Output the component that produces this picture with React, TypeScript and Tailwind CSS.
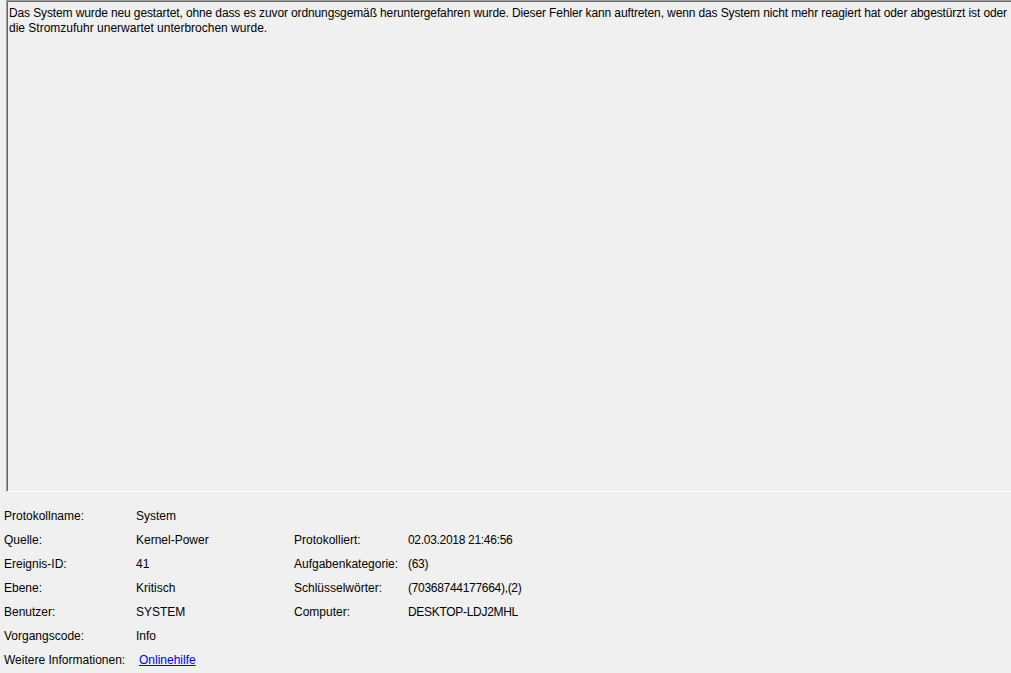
export default function App() {
  const rows: [string, React.ReactNode, string?, string?][] = [
    ['Protokollname:', 'System'],
    ['Quelle:', 'Kernel-Power', 'Protokolliert:', '02.03.2018 21:46:56'],
    ['Ereignis-ID:', '41', 'Aufgabenkategorie:', '(63)'],
    ['Ebene:', 'Kritisch', 'Schlüsselwörter:', '(70368744177664),(2)'],
    ['Benutzer:', 'SYSTEM', 'Computer:', 'DESKTOP-LDJ2MHL'],
    ['Vorgangscode:', 'Info'],
  ];

  return (
    <div
      className="w-[1011px] h-[673px] overflow-hidden bg-[#f0f0f0] text-black text-[12px] leading-[13px]"
      style={{ fontFamily: '"Liberation Sans", Arial, sans-serif' }}
    >
      {/* Beschreibung */}
      <div className="ml-[6px] h-[492px] border-l border-t border-[#a0a0a0] border-b border-b-white">
        <div className="h-full border-l border-t border-[#696969] pl-[1px] pt-[4px] leading-[15px] whitespace-nowrap">
          <span className="tracking-[-0.12px]">
            Das System wurde neu gestartet, ohne dass es zuvor ordnungsgemäß heruntergefahren wurde. Dieser Fehler kann auftreten, wenn das System nicht mehr reagiert hat oder abgestürzt ist oder
          </span>
          <br />
          die Stromzufuhr unerwartet unterbrochen wurde.
        </div>
      </div>

      {/* Details */}
      <div className="pt-[12px] pl-[4px]">
        {rows.map(([l1, v1, l2, v2]) => (
          <div key={l1} className="flex h-[24px] items-center">
            <div className="w-[132px]">{l1}</div>
            <div className="w-[158px]">{v1}</div>
            <div className="w-[114px]">{l2}</div>
            <div className="tracking-[-0.3px]">{v2}</div>
          </div>
        ))}
        <div className="flex h-[24px] items-center">
          <div className="w-[135px]">Weitere Informationen:</div>
          <a href="#" className="text-[#0000ff] underline">
            Onlinehilfe
          </a>
        </div>
      </div>
    </div>
  );
}
